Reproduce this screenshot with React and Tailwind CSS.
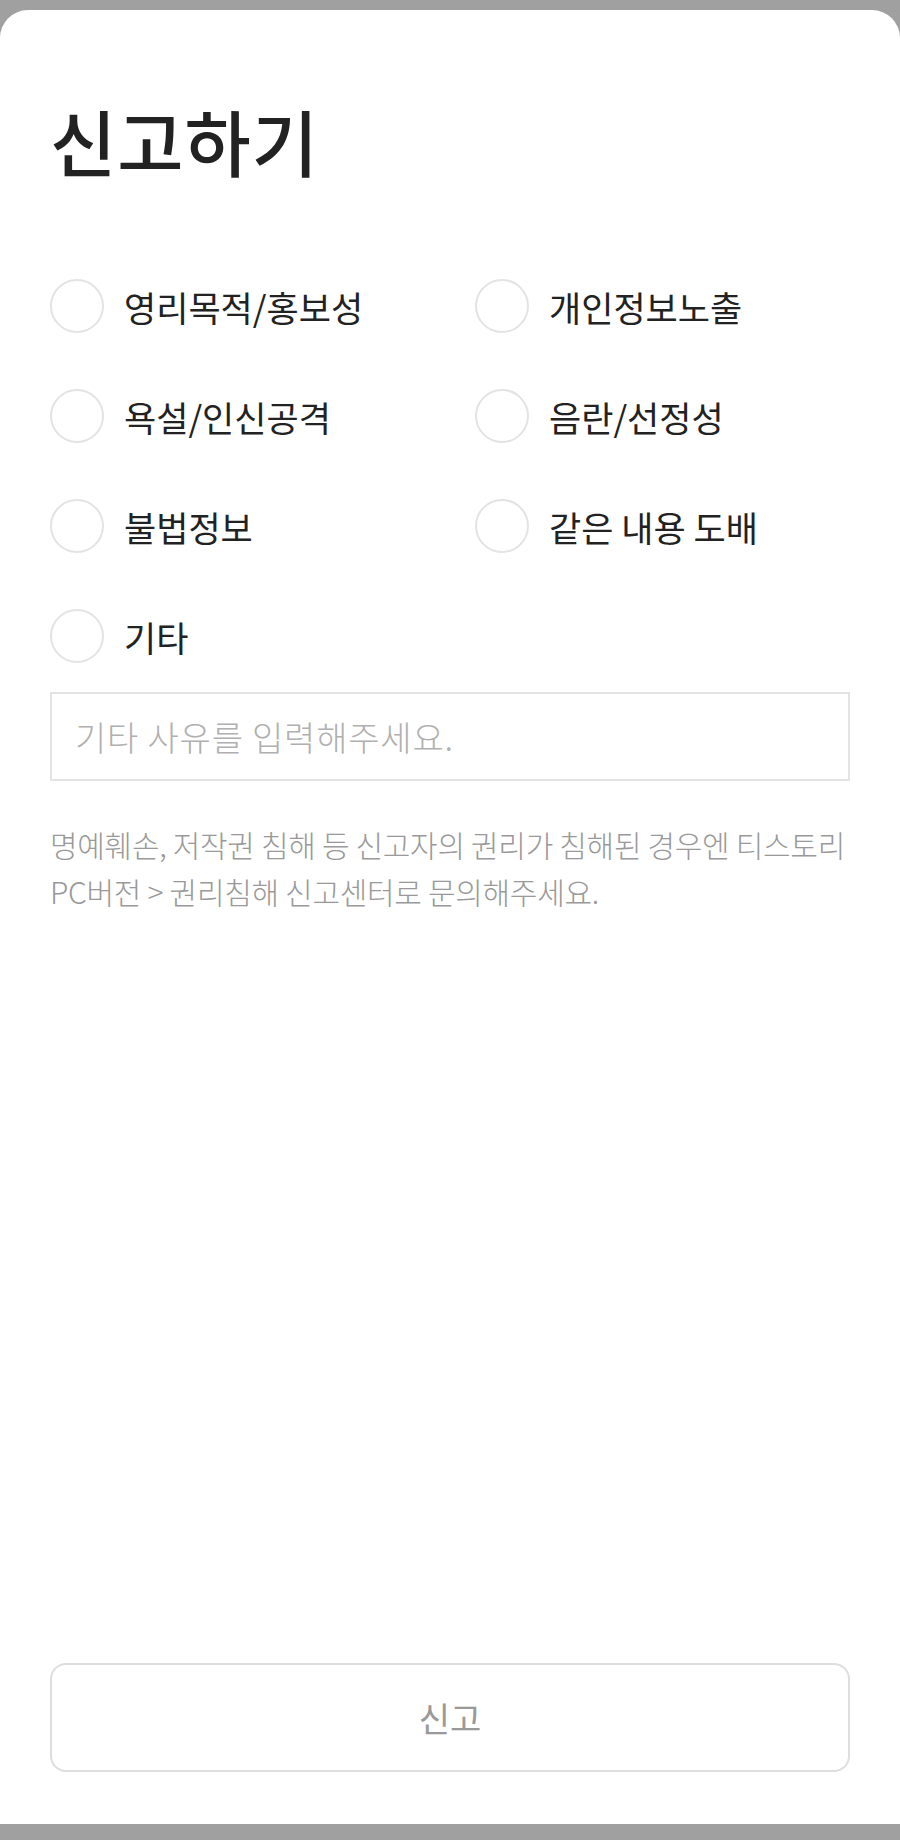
import React, { useState } from "react";

const reasons = [
  "영리목적/홍보성",
  "개인정보노출",
  "욕설/인신공격",
  "음란/선정성",
  "불법정보",
  "같은 내용 도배",
  "기타",
];

const font = { fontFamily: '"Noto Sans CJK KR", "Noto Sans", sans-serif' };

const ReportSheet = () => {
  const [selected, setSelected] = useState(null);
  const [etc, setEtc] = useState("");

  return (
    <div
      className="w-[900px] h-[1840px] bg-[#a0a0a0] flex flex-col pt-[10px] pb-[16px]"
      style={font}
    >
      <div className="flex-1 bg-white rounded-t-[28px] flex flex-col px-[50px] pb-[52px]">
        <h1 className="mt-[94px] text-[72px] leading-none font-medium tracking-[1px] text-[#222]">
          신고하기
        </h1>

        <div className="mt-[103px] grid grid-cols-[425px_1fr] gap-y-[56px]">
          {reasons.map((name, i) => (
            <label
              key={name}
              className="flex items-center gap-[20px] cursor-pointer"
              onClick={() => setSelected(i)}
            >
              <span
                className={
                  selected === i
                    ? "w-[54px] h-[54px] rounded-full border-[16px] border-[#ff5544] shrink-0"
                    : "w-[54px] h-[54px] rounded-full border-2 border-[#e3e3e3] shrink-0"
                }
              />
              <span className="text-[35px] leading-none text-[#222]">
                {name}
              </span>
            </label>
          ))}
        </div>

        <input
          type="text"
          value={etc}
          onChange={(ev) => setEtc(ev.target.value)}
          placeholder="기타 사유를 입력해주세요."
          className="mt-[29px] w-full h-[89px] border-2 border-[#e3e3e3] px-[23px] text-[34px] tracking-[0.8px] font-light text-[#333] placeholder:text-[#b0b0b0] outline-none"
        />

        <p className="mt-[40px] text-[30px] leading-[47px] font-light tracking-[-0.3px] text-[#999]">
          명예훼손, 저작권 침해 등 신고자의 권리가 침해된 경우엔 티스토리
          <br />
          PC버전 &gt; 권리침해 신고센터로 문의해주세요.
        </p>

        <div className="flex-1" />

        <button
          type="button"
          className="w-full h-[109px] rounded-[16px] border-2 border-[#dedede] bg-white text-[34px] text-[#999]"
        >
          신고
        </button>
      </div>
    </div>
  );
};

export default ReportSheet;
